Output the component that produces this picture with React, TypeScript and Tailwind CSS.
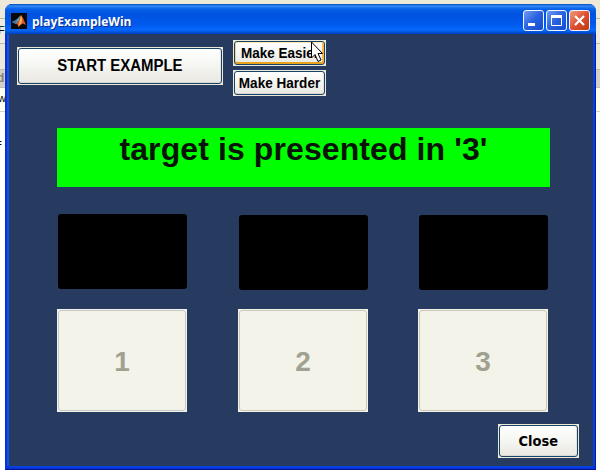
import type { ReactNode } from 'react';

function MatlabIcon() {
  return (
    <svg width="16" height="16" viewBox="0 0 16 16" className="block shrink-0">
      <rect width="16" height="16" fill="#080808" />
      <path d="M1 9 L5 7 L8 4 L9.5 2.5 L8 8 L5 11 Z" fill="#55a5c2" />
      <path d="M1 9 L5 7 L6.5 8 L4 10.5 Z" fill="#3774a8" />
      <path d="M5 11 L7.2 8.8 L10 2 L12 5 L15 12 L12 10.5 L9.5 12 L7.5 14 L6.5 11.5 Z" fill="#d6582a" />
      <path d="M10 2 L11.2 6 L10.5 10 L7.5 13.5 L8.5 8 Z" fill="#ffa95b" />
    </svg>
  );
}

function Caption({ red, children }: { red?: boolean; children: ReactNode }) {
  return (
    <button
      className={`flex h-[21px] w-[21px] items-center justify-center rounded-[3px] border border-[#f3f6ff] ${
        red
          ? 'bg-linear-to-br from-[#ed9a80] via-[#df5030] to-[#b93a14]'
          : 'bg-linear-to-br from-[#719bf3] via-[#2861df] to-[#164bd0]'
      }`}
    >
      <svg width="19" height="19" viewBox="0 0 19 19" fill="none" stroke="#fff" className="block shrink-0">
        {children}
      </svg>
    </button>
  );
}

function PushButton({ className, hot, children }: { className: string; hot?: boolean; children: ReactNode }) {
  return (
    <div className={`shrink-0 bg-[#ece9d8] p-px ${className}`}>
      <button
        className={`flex h-full w-full items-center justify-center rounded-[3px] border border-[#174369] bg-linear-to-b from-white via-[#f5f5f1] to-[#e9e8e2] whitespace-nowrap font-bold text-black ${
          hot ? 'shadow-[inset_0_1px_#ffe8ae,inset_0_-2px_#e9a21c,inset_1px_0_#fbd07c,inset_-2px_0_#f5bb4c]' : 'shadow-[inset_0_-1px_#d9d7cf,inset_-1px_0_#e5e3dc]'
        }`}
      >
        {children}
      </button>
    </div>
  );
}

const choices = [
  { label: '1', panel: 'mt-0 ml-px', border: 'border-[#c5c9cc]', column: 'mr-[51px]' },
  { label: '2', panel: 'mt-px ml-px', border: 'border-[#cbc7b9]', column: 'mr-[50px]' },
  { label: '3', panel: 'mt-px ml-px', border: 'border-[#c9c7ba]', column: '' },
];

export default function App() {
  return (
    <div className="relative flex h-[472px] w-[600px] flex-col overflow-hidden bg-white font-['Liberation_Sans',Arial,sans-serif] text-[10px] leading-none">
      <div className="h-[18px] shrink-0 bg-[#ece9d8]" />
      <div className="h-[26px] shrink-0 border-y border-[#bbb8aa] bg-[#efecdf] pt-[6px] text-[11px]"><span className="-ml-[2px]">Fr</span></div>
      <div className="h-[25px] shrink-0 bg-[#ece9d8]" />
      <div className="h-[19px] shrink-0 border-y border-[#c4c0b0] bg-[#d4d0c8] pt-[2px] text-[12px] font-bold text-[#858279]"><span className="-ml-[3px]">d</span></div>
      <div className="h-[24px] shrink-0 border-b border-[#d5d2c4] bg-[#fffff0] pt-[5px] text-[11px]"><span className="-ml-[2px]">w</span></div>
      <div className="h-[360px] shrink-0 pt-[27px]"><span className="-ml-[4px]">=</span></div>

      <section className="absolute top-[4px] left-[5px] flex h-[466px] w-[591px] flex-col overflow-hidden rounded-t-[7px] bg-[#0831d9]">
        <header className="flex h-[30px] shrink-0 items-center bg-[linear-gradient(to_bottom,#0649ba_0px,#328bf5_2px,#0761e9_5px,#0052df_10px,#0059ec_20px,#0667fc_26px,#0056dc_28px,#003ec0_30px)] pt-[3px] pr-[6px] pl-[6px]">
          <MatlabIcon />
          <h1 className="ml-[5px] flex-1 origin-left scale-x-[0.923] whitespace-nowrap font-['Open_Sans','Noto_Sans',sans-serif] text-[13px] leading-[18px] font-bold text-white [text-shadow:1px_1px_#0b318f]">playExampleWin</h1>
          <div className="flex gap-[2px]">
            <Caption><path d="M4 13.5H11" strokeWidth="3" /></Caption>
            <Caption><path d="M4.5 5V14.5H14.5V5" /><path d="M4 5.5H15" strokeWidth="3" /></Caption>
            <Caption red><path d="M5 5L14 14M14 5L5 14" strokeWidth="2.2" /></Caption>
          </div>
        </header>

        <div className="flex min-h-0 flex-1 border-x border-b border-l-[#0831d9] border-r-[#001ea0] border-b-[#00138c]">
          <main className="mr-[2px] mb-[3px] ml-[3px] flex flex-1 flex-col bg-[#273b60] shadow-[-2px_0_#1550e6,2px_0_#0740df,0_2px_#0740df]">
            <div className="flex h-[62px] shrink-0 items-start gap-[10px] pl-[8px]">
              <PushButton className="mt-[13px] h-[38px] w-[206px] text-[16px]"><span className="scale-x-[0.935]">START EXAMPLE</span></PushButton>
              <div className="relative flex flex-col gap-[4px] pt-[6px]">
                <PushButton hot className="h-[26px] w-[93px] text-[14.5px]"><span className="scale-x-[0.93]">Make Easier</span></PushButton>
                <PushButton className="h-[26px] w-[93px] text-[14.5px]"><span className="scale-x-[0.935]">Make Harder</span></PushButton>
                <svg width="14" height="22" viewBox="0 0 14 22" className="absolute top-[7px] left-[77px]">
                  <path d="M1.5 1V17L5 13.5L8 20.5L11 19L8 12.5H12.5Z" fill="#fff" stroke="#000" />
                </svg>
              </div>
            </div>

            <div className="mt-[32px] ml-[48px] h-[59px] w-[493px] shrink-0 bg-[#00ff00] pt-[3px] text-center text-[32px] leading-[37px] font-bold tracking-[0.1px] text-[#071407]">target is presented in '3'</div>

            <div className="mt-[27px] ml-[48px] flex">
              {choices.map(({ label, panel, border, column }) => (
                <div key={label} className={`flex h-[198px] w-[130px] flex-col justify-between ${column}`}>
                  <div className={`h-[75px] w-[129px] rounded-[3px] bg-black ${panel}`} />
                  <div className="h-[103px] bg-[#f5f4ea] p-px">
                    <button disabled className={`flex h-full w-full items-center justify-center rounded-[3px] border ${border} bg-[#f4f3e9] pt-[2px] text-[28px] font-bold text-[#a1a192]`}>{label}</button>
                  </div>
                </div>
              ))}
            </div>

            <div className="mt-[12px] mr-[14px] flex justify-end">
              <PushButton className="h-[34px] w-[81px] font-['DejaVu_Sans','Noto_Sans',sans-serif] text-[14px]"><span className="scale-x-[0.93]">Close</span></PushButton>
            </div>
          </main>
        </div>
      </section>
    </div>
  );
}
